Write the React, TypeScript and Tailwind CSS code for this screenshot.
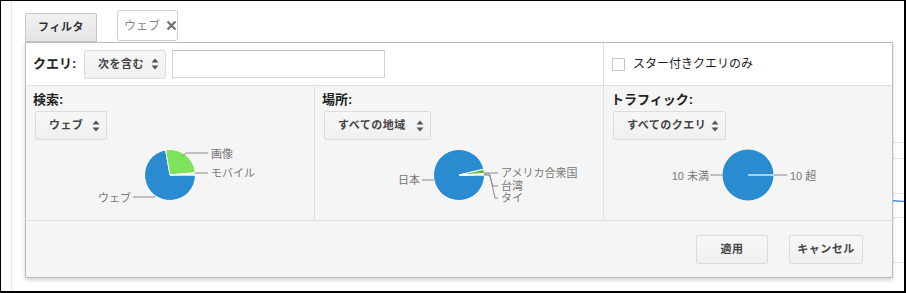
import React from "react";

type Slice = { from: number; to: number; color: string };
type Label = { text: string; x: number; y: number; anchor: "start" | "end"; line: string };

const rad = (d: number) => (d * Math.PI) / 180;

// pie slice path, angles in degrees clockwise from 3 o'clock
const slicePath = (cx: number, cy: number, r: number, a0: number, a1: number) => {
  const x0 = cx + r * Math.cos(rad(a0));
  const y0 = cy + r * Math.sin(rad(a0));
  const x1 = cx + r * Math.cos(rad(a1));
  const y1 = cy + r * Math.sin(rad(a1));
  const large = a1 - a0 > 180 ? 1 : 0;
  return `M${cx} ${cy} L${x0} ${y0} A${r} ${r} 0 ${large} 1 ${x1} ${y1} Z`;
};

const Arrows = () => (
  <svg width="8" height="12" viewBox="0 0 8 12" className="shrink-0">
    <path d="M4 0.5 L7.5 4.5 H0.5 Z" fill="#555" />
    <path d="M4 11.5 L7.5 7.5 H0.5 Z" fill="#555" />
  </svg>
);

const Select = ({ label, width }: { label: string; width: string }) => (
  <div
    className={`flex h-[29px] items-center rounded-[2px] border border-[#dcdcdc] bg-linear-to-b from-[#f7f7f7] to-[#f0f0f0] pl-[13px] pr-[6px] text-[11px] font-bold tracking-[0.5px] text-[#444] ${width}`}
  >
    <span className="whitespace-nowrap">{label}</span>
    <span className="ml-auto">
      <Arrows />
    </span>
  </div>
);

const PieChart = ({
  slices,
  labels,
  full,
}: {
  slices: Slice[];
  labels: Label[];
  full?: boolean;
}) => {
  const cx = 144;
  const cy = 30;
  const r = 25.5;
  return (
    <svg width="288" height="64" viewBox="0 0 288 64" className="block">
      {full ? (
        <>
          <circle cx={cx} cy={cy} r={r} fill="#2a8bd0" />
          <line x1={cx} y1={cy} x2={cx + r} y2={cy} stroke="#fff" strokeWidth="1.2" />
        </>
      ) : (
        slices.map((s, i) => (
          <path
            key={i}
            d={slicePath(cx, cy, r, s.from, s.to)}
            fill={s.color}
            stroke="#fff"
            strokeWidth="1"
            strokeLinejoin="round"
          />
        ))
      )}
      {labels.map((l, i) => (
        <g key={i}>
          <polyline points={l.line} fill="none" stroke="#8a8a8a" strokeWidth="1" />
          <text
            x={l.x}
            y={l.y}
            textAnchor={l.anchor}
            dominantBaseline="central"
            fontSize="11"
            fill="#777"
          >
            {l.text}
          </text>
        </g>
      ))}
    </svg>
  );
};

const Column = ({
  title,
  select,
  width,
  border,
  chart,
}: {
  title: string;
  select: string;
  width: string;
  border: boolean;
  chart: React.ReactNode;
}) => (
  <div className={`flex flex-col ${border ? "w-[289px] border-r border-[#e0e0e0]" : "flex-1"}`}>
    <div className="flex flex-col pl-[7px] pt-[5px]">
      <h2 className="text-[13px] font-bold leading-[18px] text-[#222]">{title}</h2>
      <div className="ml-[2px] mt-[2px]">
        <Select label={select} width={width} />
      </div>
    </div>
    <div className="mt-[5px]">{chart}</div>
  </div>
);

const Button = ({ label, width }: { label: string; width: string }) => (
  <button
    className={`h-[29px] rounded-[2px] border border-[#dcdcdc] bg-linear-to-b from-[#f7f7f7] to-[#f1f1f1] text-[11px] font-bold tracking-[0.5px] text-[#444] ${width}`}
  >
    {label}
  </button>
);

export default function App() {
  return (
    <div className="relative flex h-[293px] w-[906px] overflow-hidden border-b-2 border-l border-r-2 border-t border-black bg-white font-['Liberation_Sans','Noto_Sans_CJK_JP',sans-serif]">
      {/* page content behind the filter panel */}
      <div className="absolute left-[600px] right-0 top-[141px] flex flex-col">
        <div className="h-[16px] border-t border-[#e6e6e6]" />
        <div className="h-[35px] border-t border-[#e6e6e6]" />
        <div className="relative h-[24px] border-t border-[#e6e6e6]">
          <svg className="absolute right-0 top-[5px]" width="20" height="4" viewBox="0 0 20 4">
            <path d="M0 1 L20 2.5" stroke="#4d8ff0" strokeWidth="1.5" fill="none" />
          </svg>
        </div>
        <div className="h-[45px] border-t border-[#e6e6e6]" />
        <div className="border-t border-[#e6e6e6]" />
      </div>

      <div className="ml-[10px] w-px bg-[#e8e8e8]" />

      <div className="relative ml-[13px] flex flex-col pt-[9px]">
        {/* filter bar */}
        <div className="flex items-end gap-[20px]">
          <button className="h-[29px] w-[72px] rounded-t-[2px] border border-[#c8c8c8] bg-linear-to-b from-[#f2f2f2] to-[#e4e4e4] text-[11px] font-bold tracking-[0.5px] text-[#333]">
            フィルタ
          </button>
          <div className="mb-px flex h-[31px] w-[61px] items-center gap-[6px] rounded-[3px] border border-[#cfcfcf] bg-white pl-[6px] text-[12px] text-[#888]">
            <span>ウェブ</span>
            <svg width="11" height="11" viewBox="0 0 11 11">
              <path d="M1.5 1.5 L9.5 9.5 M9.5 1.5 L1.5 9.5" stroke="#707070" strokeWidth="2.2" />
            </svg>
          </div>
        </div>

        {/* filter panel */}
        <div className="flex h-[236px] w-[868px] flex-col border border-[#bcbcbc] bg-white shadow-[0_2px_4px_rgba(0,0,0,0.18)]">
          <div className="flex h-[43px] border-b border-[#e0e0e0]">
            <div className="flex w-[578px] items-center border-r border-[#e0e0e0] pl-[7px]">
              <span className="w-[51px] text-[13px] font-bold text-[#222]">クエリ:</span>
              <Select label="次を含む" width="w-[82px]" />
              <input
                className="ml-[6px] h-[28px] w-[213px] border border-[#d4d4d4] border-t-[#c0c0c0] bg-white outline-none"
                type="text"
              />
            </div>
            <label className="flex flex-1 items-center pl-[8px] text-[12px] text-[#222]">
              <span className="mr-[8px] h-[13px] w-[13px] border border-[#c6c6c6] bg-white" />
              スター付きクエリのみ
            </label>
          </div>

          <div className="flex h-[135px] border-b border-[#e0e0e0] bg-[#f5f5f5]">
            <Column
              title="検索:"
              select="ウェブ"
              width="w-[72px]"
              border
              chart={
                <PieChart
                  slices={[
                    { from: 0, to: 260, color: "#2a8bd0" },
                    { from: 260, to: 355, color: "#7de35c" },
                    { from: 355, to: 360, color: "#e4e4e4" },
                  ]}
                  labels={[
                    { text: "画像", x: 185, y: 9, anchor: "start", line: "157,11 160,8 182,8" },
                    { text: "モバイル", x: 185, y: 28, anchor: "start", line: "169,28 182,28" },
                    { text: "ウェブ", x: 105, y: 53, anchor: "end", line: "107,52 128,52 131,50" },
                  ]}
                />
              }
            />
            <Column
              title="場所:"
              select="すべての地域"
              width="w-[107px]"
              border
              chart={
                <PieChart
                  slices={[
                    { from: 0, to: 347, color: "#2a8bd0" },
                    { from: 347, to: 357, color: "#5dbb34" },
                    { from: 357, to: 358.5, color: "#e4e4e4" },
                    { from: 358.5, to: 360, color: "#e4e4e4" },
                  ]}
                  labels={[
                    { text: "アメリカ合衆国", x: 186, y: 28, anchor: "start", line: "169,28 183,28" },
                    { text: "台湾", x: 186, y: 41, anchor: "start", line: "169,29 174,29 178,41 183,41" },
                    { text: "タイ", x: 186, y: 53, anchor: "start", line: "169,30 175,30 180,53 183,53" },
                    { text: "日本", x: 105, y: 35, anchor: "end", line: "107,35 119,35" },
                  ]}
                />
              }
            />
            <Column
              title="トラフィック:"
              select="すべてのクエリ"
              width="w-[113px]"
              border={false}
              chart={
                <PieChart
                  full
                  slices={[]}
                  labels={[
                    { text: "10 未満", x: 105, y: 31, anchor: "end", line: "106,30 119,30" },
                    { text: "10 超", x: 186, y: 31, anchor: "start", line: "170,30 183,30" },
                  ]}
                />
              }
            />
          </div>

          <div className="flex flex-1 items-center justify-end gap-[21px] bg-[#f5f5f5] pr-[29px]">
            <Button label="適用" width="w-[72px]" />
            <Button label="キャンセル" width="w-[74px]" />
          </div>
        </div>
      </div>
    </div>
  );
}
